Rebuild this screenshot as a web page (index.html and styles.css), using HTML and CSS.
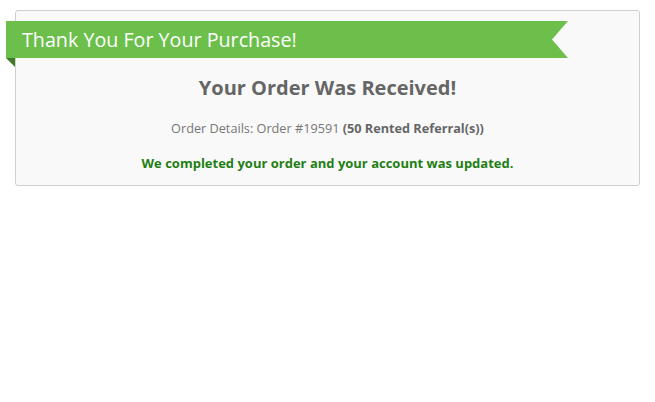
FILE: index.html
```html
<!DOCTYPE html>
<html>
<head>
<meta charset="utf-8">
<link rel="stylesheet" href="styles.css">
</head>
<body>
<div class="page">
  <div class="box">
    <div class="ribbon">Thank You For Your Purchase!</div>
    <h2 class="heading">Your Order Was Received!</h2>
    <p class="details">Order Details: Order #19591 <b>(50 Rented Referral(s))</b></p>
    <p class="success">We completed your order and your account was updated.</p>
  </div>
</div>
</body>
</html>
```
FILE: styles.css
```css
html, body {
  margin: 0;
  padding: 0;
  background: #fff;
  font-family: "Open Sans", "DejaVu Sans", sans-serif;
}
.page {
  padding: 10px 15px 0 15px;
  width: 625px;
}
.box {
  position: relative;
  box-sizing: border-box;
  width: 625px;
  height: 176px;
  border: 1px solid #cfcfcf;
  border-radius: 3px;
  background: #f9f9f9;
  padding-top: 10px;
}
.ribbon {
  box-sizing: border-box;
  margin-left: -10px;
  width: 562px;
  height: 37px;
  background: #6cbf4b;
  color: #fff;
  font-size: 19.7px;
  line-height: 37px;
  padding-left: 16px;
  clip-path: polygon(0 0, 100% 0, calc(100% - 16px) 50%, 100% 100%, 0 100%);
}
.box::before {
  content: "";
  position: absolute;
  left: -10px;
  top: 47px;
  width: 0;
  height: 0;
  border-top: 9px solid #3f7a2a;
  border-left: 9px solid transparent;
}
.heading {
  margin: 16px 0 0 0;
  text-align: center;
  font-size: 20px;
  font-weight: 700;
  color: #666;
  line-height: 28px;
}
.details {
  margin: 18px 0 0 0;
  text-align: center;
  font-size: 12.7px;
  color: #777;
  line-height: 16px;
}
.details b { color: #666; }
.success {
  margin: 19px 0 0 0;
  text-align: center;
  font-size: 13px;
  font-weight: 700;
  color: #1f7f14;
  line-height: 16px;
}
```
